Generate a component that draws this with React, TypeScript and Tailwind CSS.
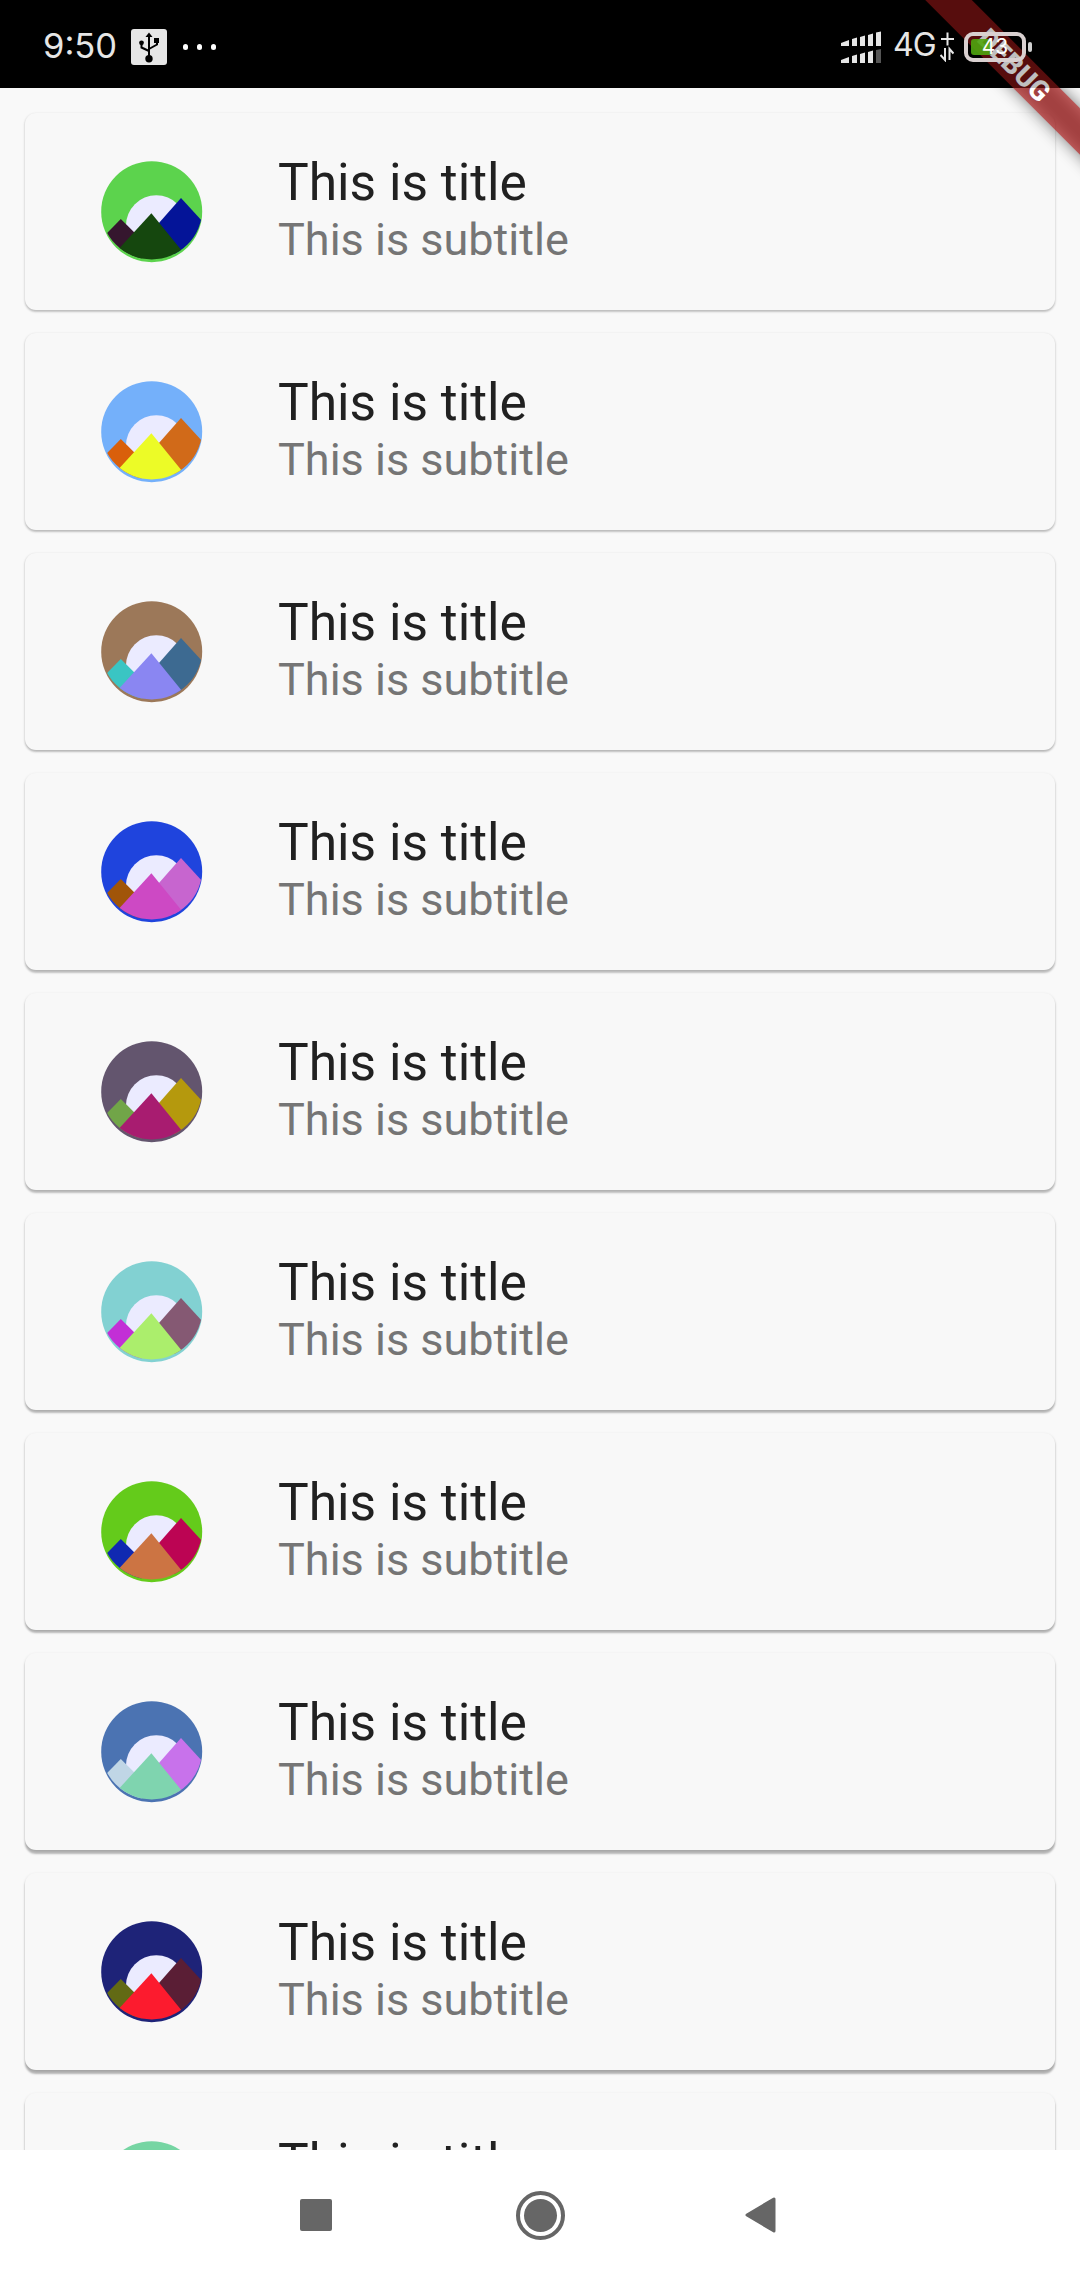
import React from "react";

type Palette = { sky: string; left: string; right: string; front: string };

const items: Palette[] = [
  { sky: "#5cd34d", left: "#35162e", right: "#041498", front: "#15470e" },
  { sky: "#74b0fa", left: "#d95f0b", right: "#d16a19", front: "#ecfb27" },
  { sky: "#9c7859", left: "#3ac5c3", right: "#3d6a91", front: "#8a86f2" },
  { sky: "#1f44dd", left: "#a15509", right: "#c765cf", front: "#cd49c4" },
  { sky: "#63556e", left: "#71a548", right: "#b5990d", front: "#a81c70" },
  { sky: "#82d1d2", left: "#c22fd6", right: "#855973", front: "#abee6c" },
  { sky: "#64cb1b", left: "#1029b1", right: "#bc0453", front: "#cc7443" },
  { sky: "#4b73b2", left: "#c0d6e6", right: "#c872eb", front: "#7fd4af" },
  { sky: "#1e2378", left: "#626a14", right: "#5a1e35", front: "#fc1b2e" },
  { sky: "#76d5a3", left: "#35162e", right: "#041498", front: "#15470e" },
];

function Avatar({ p, id }: { p: Palette; id: number }) {
  return (
    <svg width="102" height="102" viewBox="0 0 102 102" className="shrink-0">
      <clipPath id={`land${id}`}>
        <circle cx="50.7" cy="47.8" r="50.6" />
      </clipPath>
      <clipPath id={`disc${id}`}>
        <circle cx="50.7" cy="50.7" r="50.5" />
      </clipPath>
      <circle cx="50.7" cy="50.7" r="50.5" fill={p.sky} />
      <circle cx="55.3" cy="64.6" r="30.3" fill="#ebebff" />
      <g clipPath={`url(#disc${id})`}>
        <g clipPath={`url(#land${id})`}>
          <path d="M19.8 58 L-10 88.5 L18 120 L50 88Z" fill={p.left} />
          <path d="M80 37 L50 71 L80 100 L122 83Z" fill={p.right} />
          <path d="M50.4 52.3 L8 98.5 L40 110 L88 98.5Z" fill={p.front} />
        </g>
      </g>
    </svg>
  );
}

function Card({ p, i }: { p: Palette; i: number }) {
  const y = 1.2 + i * 0.28;
  return (
    <div
      className="flex h-[197px] shrink-0 rounded-[11px] bg-[#f8f8f8] pt-[48px] pl-[76px]"
      style={{ boxShadow: `0 ${y}px 2px rgba(0,0,0,${0.16 + i * 0.014}), 0 1px 3px rgba(0,0,0,0.13)` }}
    >
      <Avatar p={p} id={i} />
      <div className="ml-[75px] flex flex-col whitespace-nowrap">
        <div className="-mt-[8px] h-[60px] text-[51.5px] leading-[60px] text-[#212121]">This is title</div>
        <div className="h-[53px] text-[45px] leading-[53px] text-[#757575]">This is subtitle</div>
      </div>
    </div>
  );
}

function StatusBar() {
  return (
    <header className="relative z-20 flex h-[88px] shrink-0 items-start font-[Inter,sans-serif] text-[#e6e6e6]">
      <div className="mt-[25px] ml-[43px] w-[88px] text-[34.5px] leading-[42px]">9:50</div>
      <svg className="mt-[29px]" width="36" height="36" viewBox="0 0 36 36">
        <rect width="36" height="36" rx="3" fill="#e6e6e6" />
        <g stroke="#000" strokeWidth="2" fill="none">
          <path d="M18 30V6M18 22L10.500 18.500V14M18 20L26 15.500V12" />
        </g>
        <path d="M18 3.500L21.500 8H14.500Z" />
        <circle cx="18" cy="29.800" r="3.700" />
        <circle cx="10.500" cy="13.800" r="2.400" />
        <rect x="23" y="9" width="5" height="5" />
      </svg>
      <div className="mt-[44px] ml-[16px] flex gap-[9px]">
        <i className="h-[6px] w-[5px] rounded-full bg-white" />
        <i className="h-[6px] w-[5px] rounded-full bg-white" />
        <i className="h-[6px] w-[5px] rounded-full bg-white" />
      </div>
      <svg className="mt-[31px] ml-auto" width="42" height="34" viewBox="0 0 42 34" fill="#e6e6e6">
        <path d="M1 12L9 9V15H1ZM12 8L17 6.500V15H12ZM20 6L25 4.500V15H20ZM28 4L33 2.500V15H28ZM36 1.500L41 0.500V15H36Z" />
        <path d="M1 29L9 26V32H1ZM12 25L17 23.500V32H12ZM20 23L25 21.500V32H20ZM28 21L33 19.500V32H28Z" />
        <path d="M36 19L41 18V32H36Z" fill="#555" />
      </svg>
      <div className="mt-[26px] ml-[11px] w-[47px] text-[32px] leading-[38px] tracking-[-1px]">4G</div>
      <svg className="mt-[32px]" width="14" height="30" viewBox="0 0 14 30" stroke="#e6e6e6" strokeWidth="2" fill="none">
        <path d="M1 7H14M7.500 0.500V13.500M5 16V28L0.500 23M9.500 28V17L13.500 21.500" />
      </svg>
      <div className="relative mt-[32px] ml-[10px] flex h-[30px] w-[62px] items-center rounded-[9px] border-[4px] border-[#d9d0d0]">
        <div className="ml-[3px] h-[16px] w-[21px] rounded-[3px] bg-[#4fa50e]/90" />
        <div className="absolute inset-x-0 -top-[2px] text-center text-[21px] leading-[26px] text-white">43</div>
      </div>
      <div className="mt-[42px] mr-[48px] ml-[2px] h-[10px] w-[4px] rounded-[2px] bg-[#d0d0d0]" />
    </header>
  );
}

function DebugBanner() {
  return (
    <div className="absolute top-0 right-0 z-10 h-[240px] w-[240px] overflow-hidden">
      <div className="absolute top-[49.25px] left-[24.25px] h-[33px] w-[300px] rotate-45 bg-black/50 blur-[8px]" />
      <div className="absolute top-[49.25px] left-[24.25px] flex h-[33px] w-[300px] rotate-45 items-center justify-center bg-[#b71c1c]/63">
        <span className="text-[28px] leading-[33px] font-extrabold text-white">DEBUG</span>
      </div>
      <div className="absolute inset-x-0 top-0 h-[88px] bg-black/25" />
    </div>
  );
}

export default function App() {
  return (
    <div className="relative flex h-[2280px] w-[1080px] flex-col overflow-hidden bg-[#f9f9f9] font-[Roboto,sans-serif]">
      <div className="absolute inset-x-0 top-0 h-[88px] bg-black" />
      <StatusBar />
      <DebugBanner />
      <main className="flex min-h-0 flex-1 flex-col gap-[23px] overflow-hidden px-[25px] pt-[25px]">
        {items.map((p, i) => (
          <Card key={i} p={p} i={i} />
        ))}
      </main>
      <nav className="flex h-[130px] shrink-0 items-center bg-white">
        <div className="ml-[300px] h-[32px] w-[32px] rounded-[2px] bg-[#666]" />
        <div className="ml-[184px] flex h-[49px] w-[49px] items-center justify-center rounded-full border-[4px] border-[#666]">
          <div className="h-[33px] w-[33px] rounded-full bg-[#666]" />
        </div>
        <svg className="ml-[180px]" width="31" height="38" viewBox="0 0 31 38">
          <path d="M2 19L29 3V35Z" fill="#666" stroke="#666" strokeWidth="3" strokeLinejoin="round" />
        </svg>
      </nav>
    </div>
  );
}
